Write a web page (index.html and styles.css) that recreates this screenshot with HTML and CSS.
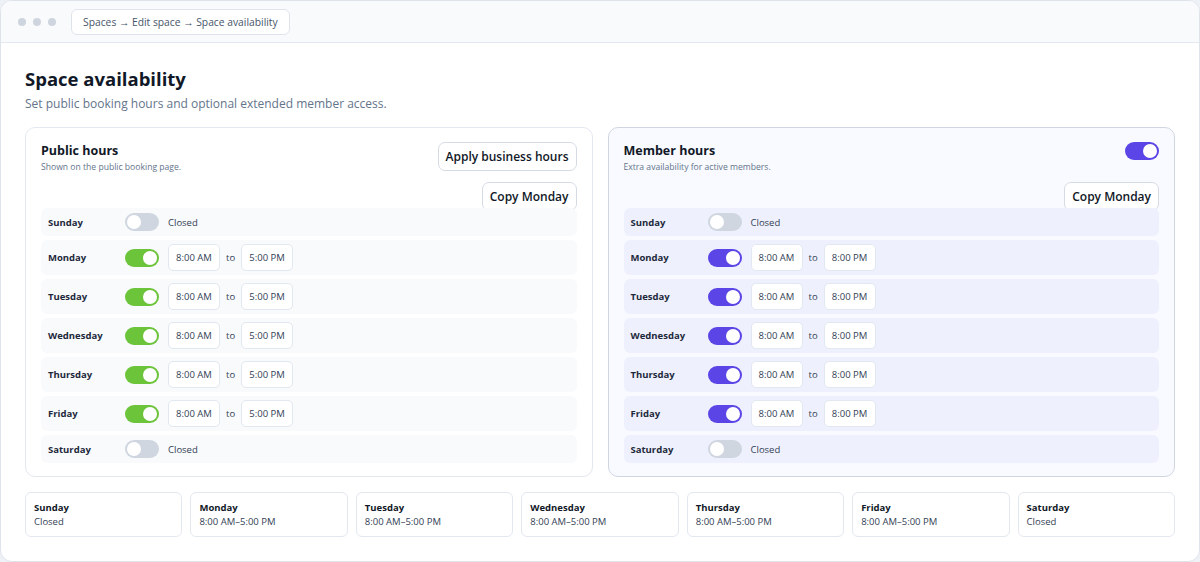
FILE: index.html
```html
<!DOCTYPE html>
<html lang="en">
<head>
    <meta charset="UTF-8">
    <meta name="viewport" content="width=device-width, initial-scale=1.0">
    <title>Space availability</title>
    <link rel="stylesheet" href="styles.css">
</head>
<body>
    <div class="window">
        <div class="titlebar">
            <div class="dots"><span></span><span></span><span></span></div>
            <div class="crumbs">Spaces → Edit space → Space availability</div>
        </div>

        <div class="content">
            <h1 class="page-title">Space availability</h1>
            <p class="page-sub">Set public booking hours and optional extended member access.</p>

            <div class="panels">
                <!-- public hours -->
                <div class="panel">
                    <div class="panel-head">
                        <div>
                            <h2 class="panel-title">Public hours</h2>
                            <div class="panel-sub">Shown on the public booking page.</div>
                        </div>
                        <div class="panel-actions">
                            <button class="btn">Apply business hours</button>
                            <button class="btn">Copy Monday</button>
                        </div>
                    </div>
                    <div class="days">
                        <div class="day"><span class="day-name">Sunday</span><span class="switch"></span><span class="closed">Closed</span></div>
                        <div class="day"><span class="day-name">Monday</span><span class="switch on"></span><span class="time">8:00 AM</span><span class="to">to</span><span class="time">5:00 PM</span></div>
                        <div class="day"><span class="day-name">Tuesday</span><span class="switch on"></span><span class="time">8:00 AM</span><span class="to">to</span><span class="time">5:00 PM</span></div>
                        <div class="day"><span class="day-name">Wednesday</span><span class="switch on"></span><span class="time">8:00 AM</span><span class="to">to</span><span class="time">5:00 PM</span></div>
                        <div class="day"><span class="day-name">Thursday</span><span class="switch on"></span><span class="time">8:00 AM</span><span class="to">to</span><span class="time">5:00 PM</span></div>
                        <div class="day"><span class="day-name">Friday</span><span class="switch on"></span><span class="time">8:00 AM</span><span class="to">to</span><span class="time">5:00 PM</span></div>
                        <div class="day"><span class="day-name">Saturday</span><span class="switch"></span><span class="closed">Closed</span></div>
                    </div>
                </div>

                <!-- member hours -->
                <div class="panel member">
                    <div class="panel-head">
                        <div>
                            <h2 class="panel-title">Member hours</h2>
                            <div class="panel-sub">Extra availability for active members.</div>
                        </div>
                        <div class="panel-actions">
                            <span class="switch on head-switch"></span>
                            <button class="btn">Copy Monday</button>
                        </div>
                    </div>
                    <div class="days">
                        <div class="day"><span class="day-name">Sunday</span><span class="switch"></span><span class="closed">Closed</span></div>
                        <div class="day"><span class="day-name">Monday</span><span class="switch on"></span><span class="time">8:00 AM</span><span class="to">to</span><span class="time">8:00 PM</span></div>
                        <div class="day"><span class="day-name">Tuesday</span><span class="switch on"></span><span class="time">8:00 AM</span><span class="to">to</span><span class="time">8:00 PM</span></div>
                        <div class="day"><span class="day-name">Wednesday</span><span class="switch on"></span><span class="time">8:00 AM</span><span class="to">to</span><span class="time">8:00 PM</span></div>
                        <div class="day"><span class="day-name">Thursday</span><span class="switch on"></span><span class="time">8:00 AM</span><span class="to">to</span><span class="time">8:00 PM</span></div>
                        <div class="day"><span class="day-name">Friday</span><span class="switch on"></span><span class="time">8:00 AM</span><span class="to">to</span><span class="time">8:00 PM</span></div>
                        <div class="day"><span class="day-name">Saturday</span><span class="switch"></span><span class="closed">Closed</span></div>
                    </div>
                </div>
            </div>

            <div class="week">
                <div class="week-card"><div class="week-day">Sunday</div><div class="week-hours">Closed</div></div>
                <div class="week-card"><div class="week-day">Monday</div><div class="week-hours">8:00 AM–5:00 PM</div></div>
                <div class="week-card"><div class="week-day">Tuesday</div><div class="week-hours">8:00 AM–5:00 PM</div></div>
                <div class="week-card"><div class="week-day">Wednesday</div><div class="week-hours">8:00 AM–5:00 PM</div></div>
                <div class="week-card"><div class="week-day">Thursday</div><div class="week-hours">8:00 AM–5:00 PM</div></div>
                <div class="week-card"><div class="week-day">Friday</div><div class="week-hours">8:00 AM–5:00 PM</div></div>
                <div class="week-card"><div class="week-day">Saturday</div><div class="week-hours">Closed</div></div>
            </div>
        </div>
    </div>
</body>
</html>
```

FILE: styles.css
```css
* {
    box-sizing: border-box;
}
body {
    font-family: 'Open Sans', 'Noto Sans', sans-serif;
    margin: 0;
    padding: 0;
    background: #eef1f5;
    color: #0f172a;
}
.window {
    height: 562px;
    background: #ffffff;
    border: 1px solid #dfe4ec;
    border-radius: 12px;
    overflow: hidden;
}
.titlebar {
    height: 42px;
    background: #f8fafc;
    border-bottom: 1px solid #e2e8f0;
    display: flex;
    align-items: center;
    padding: 0 17px;
    gap: 15px;
}
.dots {
    display: flex;
    gap: 7px;
}
.dots span {
    width: 8px;
    height: 8px;
    border-radius: 50%;
    background: #cfd5de;
}
.crumbs {
    height: 26px;
    display: flex;
    align-items: center;
    padding: 0 11px;
    background: #ffffff;
    border: 1px solid #dfe4ec;
    border-radius: 6px;
    font-size: 10.3px;
    color: #475569;
}
.content {
    padding: 23px 24px 0;
}
.page-title {
    margin: 0;
    font-size: 18.5px;
    line-height: 26px;
    font-weight: 700;
    color: #111827;
}
.page-sub {
    margin: 3px 0 14px;
    font-size: 12px;
    line-height: 18px;
    color: #64748b;
}
.panels {
    display: grid;
    grid-template-columns: 1fr 1fr;
    gap: 15px;
}
.panel {
    border: 1px solid #e2e8f0;
    border-radius: 10px;
    background: #ffffff;
    padding: 14px 15px 13px;
}
.panel.member {
    background: #f8faff;
    border-color: #cfd6e2;
}
.panel-head {
    display: flex;
    justify-content: space-between;
    align-items: flex-start;
    margin-bottom: -3px;
}
.panel-title {
    margin: 0;
    font-size: 12.5px;
    line-height: 18px;
    font-weight: 700;
    color: #111827;
}
.panel-sub {
    font-size: 8.6px;
    line-height: 14px;
    color: #64748b;
}
.panel-actions {
    display: flex;
    flex-direction: column;
    align-items: flex-end;
    gap: 11px;
}
.btn {
    font-family: inherit;
    font-size: 12px;
    font-weight: 600;
    color: #111827;
    background: #ffffff;
    border: 1px solid #d5dbe4;
    border-radius: 7px;
    height: 29px;
    padding: 0 7px;
    cursor: pointer;
}
.days {
    display: flex;
    flex-direction: column;
    gap: 4px;
}
.day {
    display: flex;
    align-items: center;
    min-height: 28px;
    padding: 4px 7px;
    background: #f8fafc;
    border-radius: 6px;
    font-size: 9.5px;
}
.member .day {
    background: #eef1fd;
}
.day-name {
    width: 77px;
    font-weight: 700;
    color: #1e293b;
}
.switch {
    position: relative;
    width: 34px;
    height: 18px;
    border-radius: 9px;
    background: #cfd6e0;
    margin-right: 9px;
    flex-shrink: 0;
}
.switch::after {
    content: '';
    position: absolute;
    top: 2px;
    left: 2px;
    width: 14px;
    height: 14px;
    border-radius: 50%;
    background: #ffffff;
}
.switch.on {
    background: #6cc43a;
}
.switch.on::after {
    left: 18px;
}
.member .switch.on {
    background: #5b45e6;
}
.panel-actions .head-switch {
    margin-right: 0;
    margin-bottom: 11px;
}
.closed {
    color: #334155;
}
.time {
    width: 52px;
    height: 27px;
    display: flex;
    align-items: center;
    justify-content: center;
    background: #ffffff;
    border: 1px solid #e2e8f0;
    border-radius: 5px;
    color: #334155;
}
.to {
    margin: 0 6px;
    color: #334155;
}
.week {
    display: grid;
    grid-template-columns: repeat(7, 1fr);
    gap: 8px;
    margin-top: 15px;
}
.week-card {
    border: 1px solid #e2e8f0;
    border-radius: 6px;
    padding: 8px 8px 7px;
    font-size: 9.5px;
    line-height: 14px;
}
.week-day {
    font-weight: 700;
    color: #111827;
}
.week-hours {
    color: #334155;
}
```
